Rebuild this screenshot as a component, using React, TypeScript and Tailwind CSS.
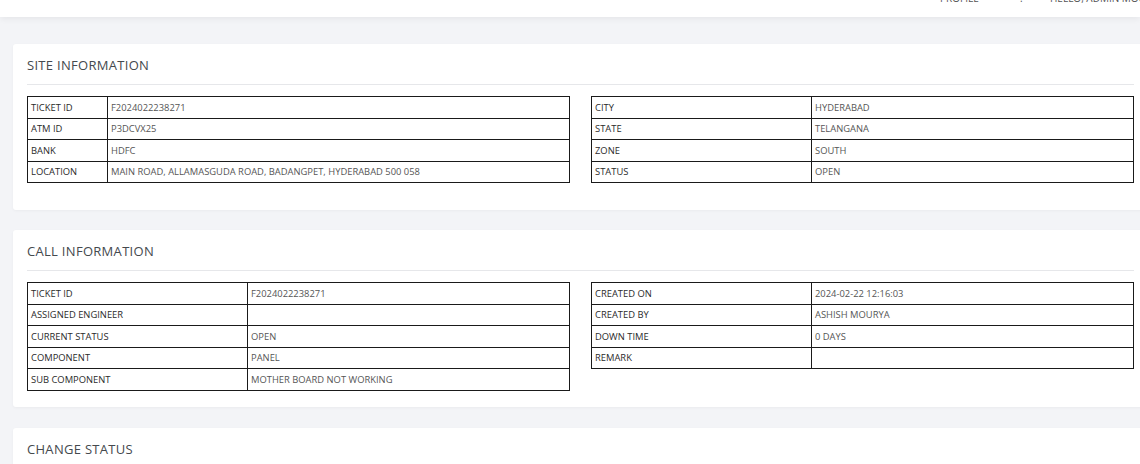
const site = {
  left: [
    ["TICKET ID", "F2024022238271"],
    ["ATM ID", "P3DCVX25"],
    ["BANK", "HDFC"],
    ["LOCATION", "MAIN ROAD, ALLAMASGUDA ROAD, BADANGPET, HYDERABAD 500 058"],
  ],
  right: [
    ["CITY", "HYDERABAD"],
    ["STATE", "TELANGANA"],
    ["ZONE", "SOUTH"],
    ["STATUS", "OPEN"],
  ],
};

const call = {
  left: [
    ["TICKET ID", "F2024022238271"],
    ["ASSIGNED ENGINEER", ""],
    ["CURRENT STATUS", "OPEN"],
    ["COMPONENT", "PANEL"],
    ["SUB COMPONENT", "MOTHER BOARD NOT WORKING"],
  ],
  right: [
    ["CREATED ON", "2024-02-22 12:16:03"],
    ["CREATED BY", "ASHISH MOURYA"],
    ["DOWN TIME", "0 DAYS"],
    ["REMARK", ""],
  ],
};

function InfoTable({ rows, labelWidth }: { rows: string[][]; labelWidth: string }) {
  return (
    <table className="w-full border-collapse border border-[#1a1a1a] text-[9.4px] leading-none self-start">
      <tbody>
        {rows.map(([k, v]) => (
          <tr key={k} className="h-[21.5px]">
            <td className={`border border-[#1a1a1a] px-[3px] text-[#2a2a2a] ${labelWidth}`}>{k}</td>
            <td className="border border-[#1a1a1a] px-[3px] text-[#555]">{v}</td>
          </tr>
        ))}
      </tbody>
    </table>
  );
}

function Card({ title, children, className = "" }: { title: string; children?: React.ReactNode; className?: string }) {
  return (
    <section className={`bg-white rounded-[3px] shadow-[0_1px_3px_rgba(0,0,0,0.04)] px-[14px] pt-[11px] ${className}`}>
      <h2 className="text-[13px] leading-[20px] tracking-[0.3px] text-[#44494e] pb-[9px] border-b border-[#e6e7ea]">
        {title}
      </h2>
      {children}
    </section>
  );
}

export default function App() {
  return (
    <div
      className="w-[1140px] h-[464px] overflow-hidden bg-[#f3f4f7]"
      style={{ fontFamily: '"Open Sans", "Noto Sans", sans-serif' }}
    >
      {/* Top bar, scrolled so only the bottom edge of its text shows */}
      <header className="h-[17px] bg-white shadow-[0_2px_6px_rgba(0,0,0,0.06)] relative z-10 overflow-hidden">
        <div className="flex items-end h-full text-[10px] leading-none text-[#555] pl-[940px] -mt-[14px] whitespace-nowrap">
          <span className="w-[80px] shrink-0">PROFILE</span>
          <span className="w-[30px] shrink-0">:</span>
          <span className="shrink-0">HELLO, ADMIN MOURYA</span>
        </div>
      </header>

      <div className="w-[1148px] pl-[13px] pt-[27px] flex flex-col">
        <Card title="SITE INFORMATION" className="pb-[27px]">
          <div className="grid grid-cols-2 gap-x-[21px] mt-[11px]">
            <InfoTable rows={site.left} labelWidth="w-[80px]" />
            <InfoTable rows={site.right} labelWidth="w-[220px]" />
          </div>
        </Card>

        <Card title="CALL INFORMATION" className="pb-[16px] mt-[20px]">
          <div className="grid grid-cols-2 gap-x-[21px] mt-[11px] items-start">
            <InfoTable rows={call.left} labelWidth="w-[220px]" />
            <InfoTable rows={call.right} labelWidth="w-[220px]" />
          </div>
        </Card>

        <Card title="CHANGE STATUS" className="mt-[21px] h-[80px]" />
      </div>
    </div>
  );
}
